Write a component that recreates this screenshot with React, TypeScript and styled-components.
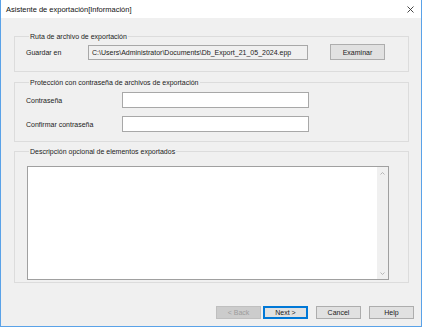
import React from 'react';
import styled, { createGlobalStyle } from 'styled-components';

const GlobalStyle = createGlobalStyle`
  html, body {
    margin: 0;
    padding: 0;
    background: #ffffff;
  }
  * {
    box-sizing: border-box;
  }
`;

const Window = styled.div`
  width: 422px;
  height: 327px;
  display: flex;
  flex-direction: column;
  background: #f0f0f0;
  border: 1px solid #5aa2e8;
  border-top: none;
  font-family: 'Liberation Sans', Arial, sans-serif;
  font-size: 7px;
  color: #222;
`;

const TitleBar = styled.div`
  height: 18px;
  flex: none;
  display: flex;
  align-items: center;
  justify-content: space-between;
  background: #ffffff;
  padding: 0 7px 0 5px;
  font-size: 7.5px;
  color: #111;
`;

const CloseIcon = styled.svg`
  width: 7px;
  height: 7px;
  margin-top: 1px;
`;

const Body = styled.div`
  flex: 1;
  display: flex;
  flex-direction: column;
  padding: 14px 0 0 13px;
`;

const Group = styled.fieldset<{ $height: number; $gap?: number }>`
  margin: 0 12px ${(p) => p.$gap ?? 0}px 0;
  padding: 0 10px 0 11px;
  height: ${(p) => p.$height}px;
  border: 1px solid #dcdcdc;
  display: flex;
  flex-direction: column;
  min-width: 0;
`;

const Legend = styled.legend`
  padding: 0 1px;
  margin-left: 3px;
  line-height: 9px;
`;

const Row = styled.div<{ $top?: number }>`
  display: flex;
  align-items: center;
  margin-top: ${(p) => p.$top ?? 0}px;
`;

const Label = styled.span<{ $width: number }>`
  width: ${(p) => p.$width}px;
  flex: none;
`;

const PathBox = styled.div`
  width: 220px;
  height: 15px;
  border: 1px solid #a8a8a8;
  background: #f0f0f0;
  display: flex;
  align-items: center;
  padding-left: 3px;
  white-space: nowrap;
  overflow: hidden;
`;

const TextInput = styled.div`
  width: 187px;
  height: 16px;
  border: 1px solid #a8a8a8;
  background: #ffffff;
`;

const Button = styled.button<{ $variant?: 'default' | 'primary' | 'disabled' }>`
  height: ${(p) => (p.$variant ? 13 : 16)}px;
  width: 45px;
  padding: 0;
  font-family: inherit;
  font-size: 7px;
  line-height: 1;
  color: ${(p) => (p.$variant === 'disabled' ? '#9c9c9c' : '#222')};
  background: ${(p) => (p.$variant === 'disabled' ? '#cccccc' : '#e1e1e1')};
  border: 1px solid
    ${(p) =>
      p.$variant === 'primary'
        ? '#0078d7'
        : p.$variant === 'disabled'
          ? '#bfbfbf'
          : '#adadad'};
  box-shadow: ${(p) => (p.$variant === 'primary' ? 'inset 0 0 0 1px #0078d7' : 'none')};
`;

const BrowseButton = styled(Button)`
  width: 55px;
  margin-left: 22px;
`;

const TextArea = styled.div`
  margin: 10px 0 0 1px;
  width: 362px;
  height: 114px;
  border: 1px solid #a0a0a0;
  background: #ffffff;
  display: flex;
  justify-content: flex-end;
`;

const ScrollTrack = styled.div`
  width: 11px;
  height: 100%;
  background: #f0f0f0;
  display: flex;
  flex-direction: column;
  justify-content: space-between;
  align-items: center;
  padding: 5px 0 4px;
`;

const Chevron = styled.svg`
  width: 5px;
  height: 3px;
`;

const Footer = styled.div`
  display: flex;
  justify-content: flex-end;
  padding: 23px 7px 0 0;
`;

const NavPair = styled.div`
  display: flex;
  gap: 2px;
  margin-right: 8px;
`;

const FooterButton = styled(Button)`
  & + & {
    margin-left: 8px;
  }
`;

export default function App() {
  return (
    <>
      <GlobalStyle />
      <Window>
        <TitleBar>
          <span>Asistente de exportación[Información]</span>
          <CloseIcon viewBox="0 0 7 7">
            <path d="M0.5 0.5L6.5 6.5M6.5 0.5L0.5 6.5" stroke="#333" strokeWidth="0.9" />
          </CloseIcon>
        </TitleBar>
        <Body>
          <Group $height={40} $gap={6}>
            <Legend>Ruta de archivo de exportación</Legend>
            <Row $top={3}>
              <Label $width={62}>Guardar en</Label>
              <PathBox>C:\Users\Administrator\Documents\Db_Export_21_05_2024.epp</PathBox>
              <BrowseButton>Examinar</BrowseButton>
            </Row>
          </Group>
          <Group $height={64} $gap={5}>
            <Legend>Protección con contraseña de archivos de exportación</Legend>
            <Row $top={5}>
              <Label $width={96}>Contraseña</Label>
              <TextInput />
            </Row>
            <Row $top={8}>
              <Label $width={96}>Confirmar contraseña</Label>
              <TextInput />
            </Row>
          </Group>
          <Group $height={136}>
            <Legend>Descripción opcional de elementos exportados</Legend>
            <TextArea>
              <ScrollTrack>
                <Chevron viewBox="0 0 5 3">
                  <path d="M0.5 2.5L2.5 0.5L4.5 2.5" fill="none" stroke="#a6a6a6" strokeWidth="0.8" />
                </Chevron>
                <Chevron viewBox="0 0 5 3">
                  <path d="M0.5 0.5L2.5 2.5L4.5 0.5" fill="none" stroke="#a6a6a6" strokeWidth="0.8" />
                </Chevron>
              </ScrollTrack>
            </TextArea>
          </Group>
          <Footer>
            <NavPair>
              <Button $variant="disabled">&lt; Back</Button>
              <Button $variant="primary">Next &gt;</Button>
            </NavPair>
            <FooterButton $variant="default">Cancel</FooterButton>
            <FooterButton $variant="default">Help</FooterButton>
          </Footer>
        </Body>
      </Window>
    </>
  );
}
